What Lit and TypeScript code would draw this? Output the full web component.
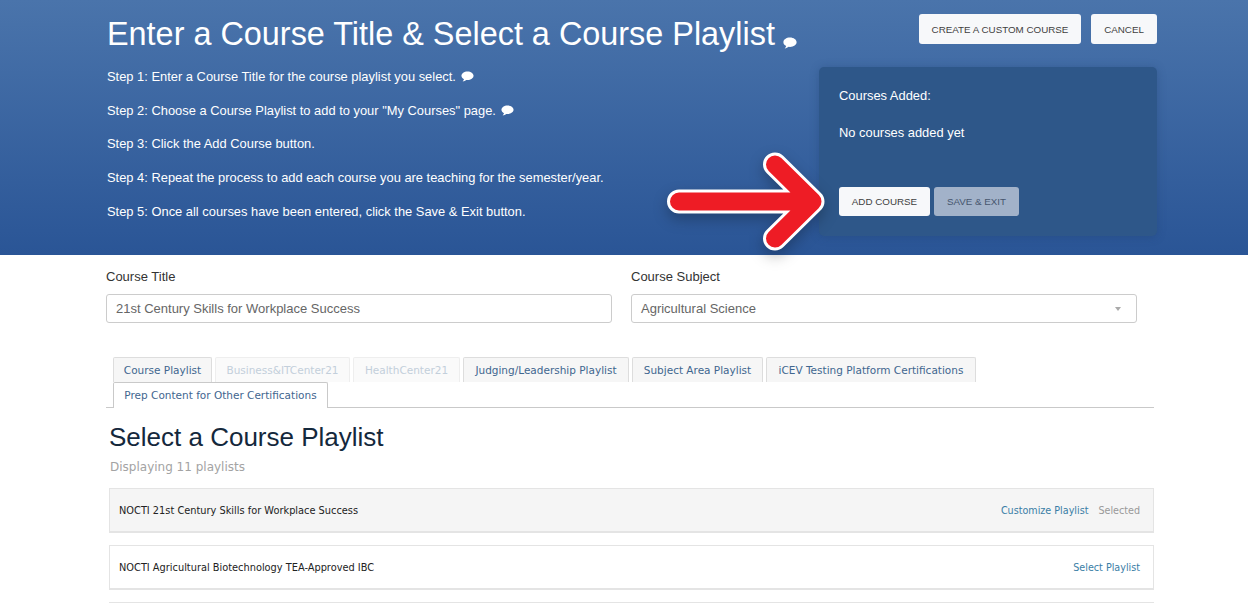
import { LitElement, html, css, svg } from "lit";
import { customElement } from "lit/decorators.js";

const bubble = (cls: string) => html`<svg class=${cls} viewBox="0 0 14 12" aria-hidden="true"><path d="M7 .6C3.3.6.4 2.7.4 5.3c0 1.6 1.1 3 2.8 3.8-.2.9-.8 1.600-1.500 2.300 1.500-.1 3-.7 4-1.600l1.300.1c3.700 0 6.600-2.100 6.600-4.600S10.700.6 7 .6z" fill="#fff"/></svg>`;

const tabsList = [
  { label: "Course Playlist", w: 99 },
  { label: "Business&ITCenter21", w: 135, faded: true },
  { label: "HealthCenter21", w: 107, faded: true },
  { label: "Judging/Leadership Playlist", w: 166 },
  { label: "Subject Area Playlist", w: 131 },
  { label: "iCEV Testing Platform Certifications", w: 210 },
  { label: "Prep Content for Other Certifications", w: 215, active: true },
];

const arrowPath = "M679 201.500H810M775 164.500L812.500 201.500L775 238.500";

@customElement("app-root")
export class AppRoot extends LitElement {
  static styles = css`
    :host { display: block; position: relative; height: 603px; overflow: hidden; background: #fff; font-family: "Liberation Sans", Arial, sans-serif; }
    .hero { height: 255px; box-sizing: border-box; background: linear-gradient(180deg, #4a74ab 0%, #2a5596 100%); display: flex; justify-content: space-between; padding: 14px 91px 0 107px; color: #fff; }
    h1 { margin: 0; padding-top: 2px; font-size: 32.400px; line-height: 37px; font-weight: 400; white-space: nowrap; display: flex; }
    .t-bubble { width: 14px; height: 12px; margin: 21px 0 0 8px; }
    .steps { margin-top: 16px; font-size: 12.900px; display: flex; flex-direction: column; gap: 18.700px; }
    .step { line-height: 15px; height: 15px; display: flex; align-items: center; white-space: nowrap; }
    .s-bubble { width: 13px; height: 11px; margin-left: 5px; }
    .side { width: 338px; display: flex; flex-direction: column; align-items: stretch; }
    .top-btns { display: flex; justify-content: flex-end; gap: 10px; }
    .btn { box-sizing: border-box; height: 30px; background: #f7f8fa; color: #3f3f3f; border: 0; border-radius: 3px; font: 9.800px "Liberation Sans", Arial, sans-serif; text-transform: uppercase; display: flex; align-items: center; justify-content: center; padding: 0; }
    .custom { width: 162px; }
    .cancel { width: 66px; }
    .panel { margin-top: 23px; height: 169px; box-sizing: border-box; background: #2e5789; border-radius: 5px; padding: 21px 20px 0; font-size: 12.900px; box-shadow: 0 1px 8px rgba(30,60,110,.35); display: flex; flex-direction: column; }
    .panel p { margin: 0; line-height: 15px; }
    .panel p + p { margin-top: 22px; }
    .panel-btns { display: flex; gap: 4px; margin-top: 47px; }
    .add { width: 91px; height: 29px; }
    .save { width: 85px; height: 29px; background: #a2b2c9; color: #47566e; }
    .main { padding: 0 94px 0 106px; }
    .fields { display: flex; gap: 19px; padding-top: 14px; width: 1031px; }
    .field { flex: 1; }
    .field label { display: block; font-size: 13px; line-height: 16px; color: #333; margin-bottom: 9px; }
    .control { height: 29px; box-sizing: border-box; border: 1px solid #ccc; border-radius: 3px; font-size: 13px; color: #666; display: flex; align-items: center; justify-content: space-between; padding: 0 15px 0 9px; }
    .caret { width: 0; height: 0; border: 3.500px solid transparent; border-top: 4px solid #aaa; border-bottom: 0; }
    .tabs { margin: 34px 0 0 0; padding: 0 0 0 7px; height: 51px; box-sizing: border-box; border-bottom: 1px solid #c9c9c9; display: flex; flex-wrap: wrap; column-gap: 3px; align-content: flex-start; font-family: "DejaVu Sans", Verdana, sans-serif; font-size: 10.500px; }
    .tab { box-sizing: border-box; height: 25px; background: #f6f6f6; border: 1px solid #ddd; border-bottom: 0; border-radius: 2px 2px 0 0; color: #3f668f; display: flex; align-items: center; justify-content: center; white-space: nowrap; }
    .tab.faded { color: #c3cfdb; background: #fafafa; border-color: #eee; }
    .tab.active { background: #fff; height: 26px; padding-bottom: 2px; border-color: #c9c9c9; }
    h2 { margin: 15px 0 0 3px; font-size: 26px; line-height: 29px; font-weight: 400; color: #14283c; }
    .count { margin: 8px 0 0 4px; font: 12px/15px "DejaVu Sans", Verdana, sans-serif; color: #a3a3a3; }
    .rows { margin: 13px 0 0 3px; display: flex; flex-direction: column; gap: 12px; font-family: "DejaVu Sans", Verdana, sans-serif; font-size: 9.800px; }
    .row { height: 45px; box-sizing: border-box; border: 1px solid #e4e4e4; border-bottom-width: 2px; padding: 0 13px 0 9px; display: flex; align-items: center; justify-content: space-between; color: #222; }
    .row.sel { background: #f5f5f5; }
    .actions { display: flex; gap: 10px; font-size: 9.600px; }
    .link { color: #3a7ea6; font-size: 9.600px; }
    .muted { color: #999; }
    .arrow { position: absolute; left: 0; top: 0; width: 1248px; height: 603px; pointer-events: none; filter: drop-shadow(0 6px 7px rgba(0,0,0,.25)); }
  `;

  render() {
    return html`
      <section class="hero">
        <div>
          <h1>Enter a Course Title &amp; Select a Course Playlist${bubble("t-bubble")}</h1>
          <div class="steps">
            <div class="step">Step 1: Enter a Course Title for the course playlist you select.${bubble("s-bubble")}</div>
            <div class="step">Step 2: Choose a Course Playlist to add to your "My Courses" page.${bubble("s-bubble")}</div>
            <div class="step">Step 3: Click the Add Course button.</div>
            <div class="step">Step 4: Repeat the process to add each course you are teaching for the semester/year.</div>
            <div class="step">Step 5: Once all courses have been entered, click the Save &amp; Exit button.</div>
          </div>
        </div>
        <div class="side">
          <div class="top-btns">
            <button class="btn custom">Create a custom course</button>
            <button class="btn cancel">Cancel</button>
          </div>
          <div class="panel">
            <p>Courses Added:</p>
            <p>No courses added yet</p>
            <div class="panel-btns">
              <button class="btn add">Add course</button>
              <button class="btn save">Save &amp; exit</button>
            </div>
          </div>
        </div>
      </section>
      <section class="main">
        <div class="fields">
          <div class="field"><label>Course Title</label><div class="control">21st Century Skills for Workplace Success</div></div>
          <div class="field"><label>Course Subject</label><div class="control">Agricultural Science<span class="caret"></span></div></div>
        </div>
        <div class="tabs">
          ${tabsList.map(t => html`<div class="tab ${t.faded ? "faded" : ""} ${t.active ? "active" : ""}" style="width:${t.w}px">${t.label}</div>`)}
        </div>
        <h2>Select a Course Playlist</h2>
        <div class="count">Displaying 11 playlists</div>
        <div class="rows">
          <div class="row sel"><span>NOCTI 21st Century Skills for Workplace Success</span><span class="actions"><span class="link">Customize Playlist</span><span class="muted">Selected</span></span></div>
          <div class="row"><span>NOCTI Agricultural Biotechnology TEA-Approved IBC</span><span class="link">Select Playlist</span></div>
          <div class="row"></div>
        </div>
      </section>
      <svg class="arrow" viewBox="0 0 1248 603" aria-hidden="true">
        ${svg`<path d=${arrowPath} fill="none" stroke="#fff" stroke-width="24" stroke-linecap="round" stroke-linejoin="round"/>
        <path d=${arrowPath} fill="none" stroke="#ee1c25" stroke-width="18" stroke-linecap="round" stroke-linejoin="round"/>`}
      </svg>
    `;
  }
}
